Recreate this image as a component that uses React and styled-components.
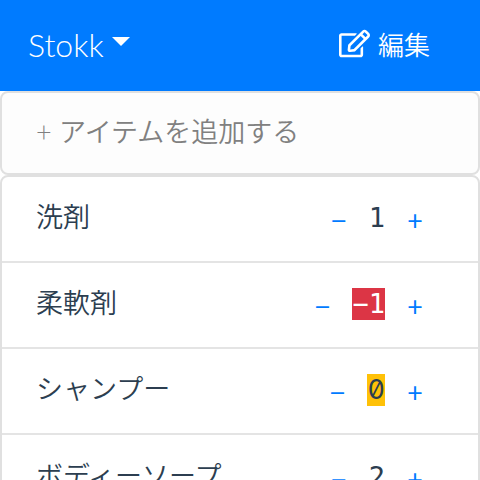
import React, { useState } from "react";
import styled, { createGlobalStyle, css } from "styled-components";
import { FaRegEdit } from "react-icons/fa";

const GlobalStyle = createGlobalStyle`
  * {
    box-sizing: border-box;
  }
  body {
    margin: 0;
    background: #fff;
    color: #2c3e50;
    font-family: "Noto Sans CJK JP", sans-serif;
    font-size: 27px;
    font-weight: 350;
    overflow-x: hidden;
  }
  button,
  input {
    font: inherit;
    color: inherit;
  }
`;

const Navbar = styled.header`
  display: flex;
  align-items: center;
  justify-content: space-between;
  height: 91px;
  padding: 0 50px 4px 28px;
  background: #007bff;
  color: #fff;
`;

const NavButton = styled.button`
  display: flex;
  align-items: center;
  gap: 8px;
  padding: 0;
  border: 0;
  background: none;
  font-size: 26px;
  line-height: 40px;
`;

const Brand = styled(NavButton)`
  padding-top: 2px;
  font-family: Lato, sans-serif;
  font-size: 32px;
  font-weight: 300;
`;

const Caret = styled.span`
  margin-bottom: 6px;
  border: 9px solid transparent;
  border-top-color: #fff;
  border-bottom: 0;
`;

const AddInput = styled.input`
  display: block;
  width: 100%;
  height: 84px;
  padding: 0 34px 4px;
  border: 2px solid #e0e0e0;
  border-radius: 8px;
  background: #fdfdfd;
  font-family: Lato, "Noto Sans CJK JP", sans-serif;
  outline: 0;

  &::placeholder {
    color: #808080;
    opacity: 1;
  }
`;

const List = styled.ul`
  margin: 0;
  padding: 0;
  border: 2px solid #e0e0e0;
  border-radius: 8px;
  list-style: none;
`;

const Row = styled.li`
  display: flex;
  align-items: center;
  justify-content: space-between;
  height: 86px;
  padding: 0 48px 0 34px;
  border-bottom: 2px solid #e4e4e4;

  &:last-child {
    border-bottom: 0;
  }
`;

const Name = styled.span`
  padding-bottom: 6px;
  line-height: 40px;
`;

const Counter = styled.div`
  display: flex;
  align-items: center;
  gap: 15px;
  padding-bottom: 2px;
`;

const StepButton = styled.button`
  width: 30px;
  padding: 4px 0 0;
  border: 0;
  background: none;
  color: #007bff;
  font-weight: 400;
  line-height: 36px;
  text-align: center;
`;

const tones = {
  low: css`
    background: #dc3545;
    color: #fff;
  `,
  empty: css`
    background: #ffc107;
    font-family: Inter, sans-serif;
    font-feature-settings: "zero", "tnum";
  `,
};

const Count = styled.span`
  font-family: "DejaVu Sans Mono", monospace;
  font-size: 27px;
  font-weight: 400;
  line-height: 32px;
  ${({ $tone }) => tones[$tone]}
`;

const initialItems = [
  { name: "洗剤", count: 1 },
  { name: "柔軟剤", count: -1 },
  { name: "シャンプー", count: 0 },
  { name: "ボディーソープ", count: 2 },
];

const toneOf = (count) => (count < 0 ? "low" : count === 0 ? "empty" : "normal");

export default function App() {
  const [items, setItems] = useState(initialItems);

  const step = (name, amount) =>
    setItems((list) =>
      list.map((item) =>
        item.name === name ? { ...item, count: item.count + amount } : item
      )
    );

  return (
    <>
      <GlobalStyle />
      <Navbar>
        <Brand type="button" aria-haspopup="menu">
          Stokk
          <Caret />
        </Brand>
        <NavButton type="button">
          <FaRegEdit size={31} aria-hidden="true" />
          編集
        </NavButton>
      </Navbar>
      <main>
        <AddInput
          type="text"
          placeholder="+ アイテムを追加する"
          aria-label="アイテムを追加する"
        />
        <List>
          {items.map(({ name, count }) => (
            <Row key={name}>
              <Name>{name}</Name>
              <Counter>
                <StepButton
                  type="button"
                  aria-label={`${name}を減らす`}
                  onClick={() => step(name, -1)}
                >
                  −
                </StepButton>
                <Count $tone={toneOf(count)}>
                  {String(count).replace("-", "−")}
                </Count>
                <StepButton
                  type="button"
                  aria-label={`${name}を増やす`}
                  onClick={() => step(name, 1)}
                >
                  +
                </StepButton>
              </Counter>
            </Row>
          ))}
        </List>
      </main>
    </>
  );
}
